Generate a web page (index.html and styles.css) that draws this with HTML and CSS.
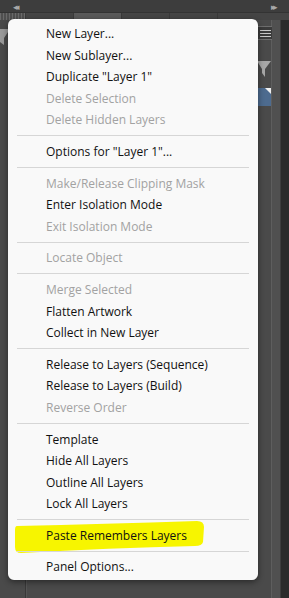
FILE: index.html
```html
<!DOCTYPE html>
<html lang="en">
<head>
    <meta charset="UTF-8">
    <meta name="viewport" content="width=device-width, initial-scale=1.0">
    <title>Layers panel menu</title>
    <link rel="stylesheet" href="styles.css">
</head>
<body>

    <div class="app">
        <div class="topbar">
            <span class="arrows">&#x25C2;&#x25C2;</span>
            <span class="arrows">&#x25B8;&#x25B8;</span>
        </div>

        <div class="tabs">
            <div class="tab ruler"></div>
            <div class="tab"></div>
            <div class="tab active"></div>
            <div class="tab"></div>
            <div class="tab"></div>
        </div>

        <div class="panel">
            <div class="panel-left">
                <svg class="funnel-left" width="10" height="16" viewBox="0 0 10 16">
                    <path d="M-6 0 H10 L4 9 V16 L0 13 V9 Z" fill="#9a9a9a"/>
                </svg>
            </div>
            <div class="panel-main"></div>
            <div class="panel-side">
                <button class="hamburger">
                    <span></span><span></span><span></span>
                </button>
                <svg class="funnel" width="14" height="16" viewBox="0 0 14 16">
                    <path d="M0 0 H14 L8 8 V16 L5 12 V8 Z" fill="#a8a8a8"/>
                </svg>
                <div class="selected-row"></div>
            </div>
            <div class="panel-strip"></div>
            <div class="panel-edge"></div>
        </div>
    </div>

    <div class="menu">
        <svg class="highlight" width="192" height="33" viewBox="0 0 192 33">
            <path d="M3 5 Q 90 3 183 0 Q 190 0 190 6 L 189 21 Q 188 25 181 25 Q 95 27 7 32 Q 1 32 1 26 L 1 9 Q 1 5 3 5 Z" fill="#f7f500"/>
        </svg>
        <ul>
            <li>New Layer...</li>
            <li>New Sublayer...</li>
            <li>Duplicate "Layer 1"</li>
            <li class="disabled">Delete Selection</li>
            <li class="disabled">Delete Hidden Layers</li>
            <li class="sep"></li>
            <li>Options for "Layer 1"...</li>
            <li class="sep"></li>
            <li class="disabled">Make/Release Clipping Mask</li>
            <li>Enter Isolation Mode</li>
            <li class="disabled">Exit Isolation Mode</li>
            <li class="sep"></li>
            <li class="disabled">Locate Object</li>
            <li class="sep"></li>
            <li class="disabled">Merge Selected</li>
            <li>Flatten Artwork</li>
            <li>Collect in New Layer</li>
            <li class="sep"></li>
            <li>Release to Layers (Sequence)</li>
            <li>Release to Layers (Build)</li>
            <li class="disabled">Reverse Order</li>
            <li class="sep"></li>
            <li>Template</li>
            <li>Hide All Layers</li>
            <li>Outline All Layers</li>
            <li>Lock All Layers</li>
            <li class="sep"></li>
            <li>Paste Remembers Layers</li>
            <li class="sep"></li>
            <li>Panel Options...</li>
        </ul>
    </div>

</body>
</html>
```

FILE: styles.css
```css
*
{
    padding: 0;
    margin: 0;
    box-sizing: border-box;
}

body
{
    width: 289px;
    height: 598px;
    overflow: hidden;
    background-color: #4a4a4a;
    font-family: "Open Sans", "Noto Sans", sans-serif;
    position: relative;
}

.app
{
    display: flex;
    flex-direction: column;
    height: 100%;
}

.topbar
{
    height: 13px;
    background-color: #3d3d3d;
    border-bottom: 1px solid #333;
    display: flex;
    justify-content: space-between;
    align-items: center;
    padding: 0 14px 0 13px;
}

.arrows
{
    color: #a8a8a8;
    font-size: 9px;
    letter-spacing: -3px;
    line-height: 1;
}

.tabs
{
    height: 7px;
    display: flex;
    background-color: #454545;
}

.tab
{
    border-right: 1px solid #3a3a3a;
    width: 48px;
}

.tab.ruler
{
    width: 26px;
    background: repeating-linear-gradient(90deg, #6a6a6a 0 1px, #4f4f4f 1px 3px);
}

.tab.active
{
    background-color: #5a5a5a;
}

.panel
{
    flex: 1;
    display: flex;
}

.panel-left
{
    width: 26px;
    border-right: 1px solid #383838;
    padding-top: 9px;
}

.funnel-left
{
    display: block;
}

.panel-main
{
    width: 225px;
    border-left: 1px solid #555;
}

.panel-side
{
    width: 21px;
    display: flex;
    flex-direction: column;
    align-items: flex-end;
    padding-top: 6px;
    border-right: 1px solid #5e5e5e;
}

.hamburger
{
    width: 17px;
    height: 14px;
    margin-right: -3px;
    background-color: #3b3b3b;
    border: 1px solid #6e6e6e;
    display: flex;
    flex-direction: column;
    justify-content: center;
    gap: 2px;
    padding: 0 2px;
}

.hamburger span
{
    display: block;
    height: 1px;
    background-color: #c8c8c8;
}

.funnel
{
    margin-top: 21px;
}

.selected-row
{
    width: 14px;
    height: 18px;
    margin-top: 11px;
    background-color: #4d6b8f;
    position: relative;
}

.selected-row::after
{
    content: "";
    position: absolute;
    top: 0;
    right: 0;
    border-top: 6px solid #f0f0f0;
    border-left: 6px solid transparent;
}

.panel-strip
{
    width: 9px;
    background-color: #505050;
    border-right: 1px solid #3e3e3e;
}

.panel-edge
{
    flex: 1;
    background-color: #2b2b2b;
}

.menu
{
    position: absolute;
    top: 19px;
    left: 8px;
    width: 250px;
    height: 561px;
    background-color: #f9f9f9;
    border-radius: 6px;
    box-shadow: 0 2px 6px rgba(0, 0, 0, 0.45);
    padding: 4px 9px 0 9px;
}

.menu ul
{
    list-style: none;
    position: relative;
}

.menu li
{
    height: 21.6px;
    line-height: 21.6px;
    padding-left: 29px;
    font-size: 12px;
    color: #111;
    white-space: nowrap;
}

.menu li.disabled
{
    color: #a2a2a2;
}

.menu li.sep
{
    height: 1px;
    margin: 4.5px 0;
    background-color: #d6d6d6;
}

.highlight
{
    position: absolute;
    left: 6px;
    top: 502px;
}
```
